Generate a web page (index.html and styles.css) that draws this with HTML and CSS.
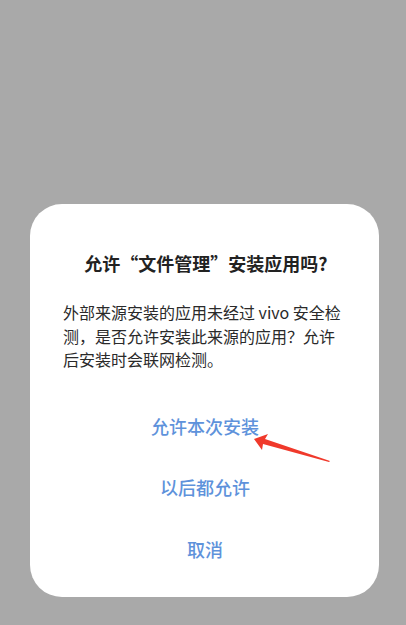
FILE: index.html
```html
<!DOCTYPE html>
<html lang="zh-CN">
<head>
<meta charset="utf-8">
<link rel="stylesheet" href="styles.css">
</head>
<body>
<div class="screen">
  <div class="dialog">
    <h1 class="title">允许“文件管理”安装应用吗?</h1>
    <p class="message">外部来源安装的应用未经过 vivo 安全检测，是否允许安装此来源的应用？允许后安装时会联网检测。</p>
    <div class="actions">
      <div class="action">允许本次安装</div>
      <div class="action">以后都允许</div>
      <div class="action">取消</div>
    </div>
    <svg class="arrow" width="90" height="40" viewBox="0 0 90 40">
      <polygon points="0,5 14,0 11,5 76,27 75,28 9,10 8,16" fill="#f0392b"/>
    </svg>
  </div>
</div>
</body>
</html>
```

FILE: styles.css
```css
html, body {
  margin: 0;
  padding: 0;
}
body {
  width: 406px;
  height: 625px;
  background: #a9a9a9;
  font-family: "Noto Sans CJK SC", "Noto Sans", sans-serif;
  overflow: hidden;
}
.screen {
  height: 625px;
  display: flex;
  flex-direction: column;
  justify-content: flex-end;
  padding: 0 27px 28px 30px;
  box-sizing: border-box;
}
.dialog {
  position: relative;
  background: #ffffff;
  border-radius: 32px;
  height: 393px;
  box-sizing: border-box;
  padding: 44px 36px 0 33px;
}
.title {
  margin: 0 -6px 0 0;
  font-size: 18px;
  font-weight: 700;
  color: #222222;
  text-align: center;
  line-height: 30px;
  white-space: nowrap;
}
.message {
  margin: 23px 0 0 0;
  font-size: 16px;
  line-height: 23.5px;
  color: #2a2a2a;
}
.actions {
  margin-top: 39px;
  margin-right: -4px;
  display: flex;
  flex-direction: column;
  align-items: center;
}
.action {
  font-size: 18px;
  font-weight: 500;
  color: #5e92db;
  height: 61.5px;
  line-height: 30px;
}
.arrow {
  position: absolute;
  left: 224px;
  top: 230px;
}
```
